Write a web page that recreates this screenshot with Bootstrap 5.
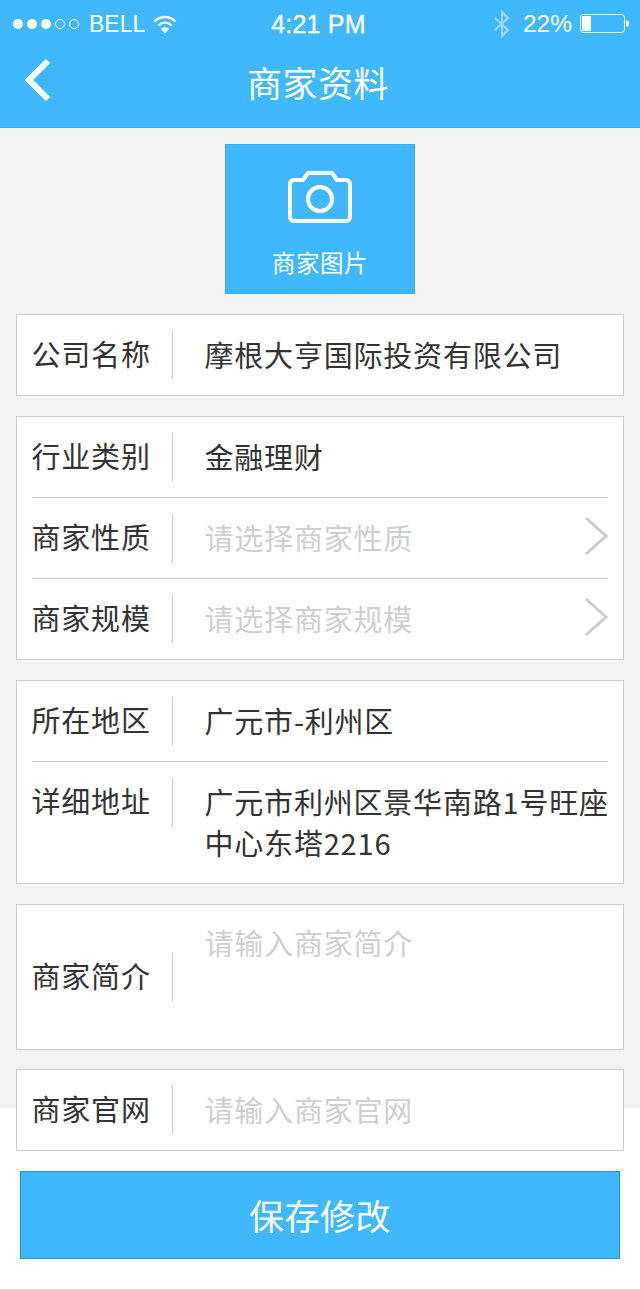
<!DOCTYPE html>
<html lang="zh-CN">
<head>
<meta charset="utf-8">
<title>商家资料</title>
<link href="https://cdn.jsdelivr.net/npm/bootstrap@5.3.0/dist/css/bootstrap.min.css" rel="stylesheet">
<style>
html,body{background:#fff}
body{width:640px;height:1289px;overflow:hidden;font-family:"Liberation Sans","Noto Sans CJK SC",sans-serif;color:#333}
.app-top{height:128px;background:#40b8ff;color:#fff;border-bottom:1px solid #35aef5}
.status-bar{height:48px;padding:0 11px 0 13px;font-size:24.5px;line-height:1}
.status-side{flex:1 1 0;min-width:0}
.status-time{font-size:25px;-webkit-text-stroke:.35px #fff;letter-spacing:.2px;margin-right:5px}
.status-bt{margin-right:13px}
.nav-title{font-size:35px;line-height:48px;font-family:"Noto Sans CJK SC",sans-serif;letter-spacing:.5px;margin-top:5px;margin-right:4px}
.nav-line{height:79px;padding:0 24px 16px}
.nav-side{flex:1 1 0}
.page-body{height:1161px;padding:16px 16px 0;background:linear-gradient(#f2f2f2 980px,#fff 980px)}
.photo-tile{width:190px;height:150px;background:#40b8ff;border:1px solid #35aef5;color:#fff;font-family:"Noto Sans CJK SC",sans-serif;font-size:23.5px;letter-spacing:.5px;line-height:32px;margin-bottom:20px;padding-top:26px}
.photo-tile svg{display:block;margin-bottom:23px}
.form-box{border:1px solid #ccc;border-radius:0;background:#fff;margin-bottom:20px}
.form-box.box-tight{margin-top:-1px}
.form-line{margin:0 15px;padding:16px 0;min-height:81px;border-bottom:1px solid #ccc;font-family:"Noto Sans CJK SC",sans-serif;font-size:29px;letter-spacing:.8px}
.form-line:last-child{border-bottom:0;min-height:80px}
.form-line.line-tall{min-height:121px}
.form-line.line-intro{min-height:144px}
.field-label{width:141px;height:48px;line-height:45px;border-right:1px solid #ccc;flex:none;color:#333;margin-left:-.5px}
.field-value{padding-left:32px;line-height:41px;padding-top:2.5px;color:#333;flex:1 1 0;min-width:0;white-space:nowrap}
.field-hint{color:#cfcfcf}
.intro-value{margin-top:1px;padding-top:0}
.row-arrow{flex:none;margin-top:2px}
.save-btn{display:block;width:600px;height:88px;margin:0 auto;background:#40b8ff;border:1px solid #0f9bd7;color:#fff;font-family:"Noto Sans CJK SC",sans-serif;font-size:35px;letter-spacing:.5px;line-height:82px;padding:0;border-radius:0}
.save-btn:hover{background:#40b8ff;color:#fff;border-color:#0f9bd7}
</style>
</head>
<body>
<header class="app-top">
  <div class="status-bar d-flex align-items-center">
    <div class="status-side d-flex align-items-center">
      <svg width="68" height="12" viewBox="0 0 68 12" class="me-2" aria-hidden="true">
        <circle cx="5" cy="6" r="5" fill="#fff"/><circle cx="19" cy="6" r="5" fill="#fff"/><circle cx="33" cy="6" r="5" fill="#fff"/>
        <circle cx="47" cy="6" r="4.5" fill="none" stroke="#fff"/><circle cx="61" cy="6" r="4.5" fill="none" stroke="#fff"/>
      </svg>
      <span style="font-size:23px">BELL</span>
      <svg width="24" height="19" viewBox="0 0 24 19" class="ms-2" aria-hidden="true">
        <path d="M1.5 6.5C7.5 .5 16.5 .5 22.5 6.5" fill="none" stroke="#fff" stroke-width="2.4"/>
        <path d="M5.5 10.5C9.5 6.6 14.5 6.6 18.5 10.5" fill="none" stroke="#fff" stroke-width="2.4"/>
        <path d="M8 14 C10.5 11.5 13.5 11.5 16 14 L12 18.5Z" fill="#fff"/>
      </svg>
    </div>
    <div class="status-time">4:21 PM</div>
    <div class="status-side d-flex align-items-center justify-content-end">
      <svg width="16" height="28" viewBox="0 0 16 28" class="status-bt" opacity=".5" aria-hidden="true">
        <path d="M1 8 14 20 8 26V2L14 8 1 20" fill="none" stroke="#fff" stroke-width="2"/>
      </svg>
      <span class="me-2">22%</span>
      <svg width="49" height="20" viewBox="0 0 49 20" aria-hidden="true">
        <rect x=".5" y=".5" width="44" height="18" rx="3" fill="none" stroke="#fff"/>
        <rect x="2" y="2" width="9" height="15" rx="1" fill="#fff"/>
        <path d="M46 6.5h1.5a1.5 1.5 0 0 1 1.5 1.5v3a1.5 1.5 0 0 1-1.5 1.5H46Z" fill="#fff"/>
      </svg>
    </div>
  </div>
  <div class="nav-line d-flex align-items-center">
    <div class="nav-side">
      <svg width="28" height="44" viewBox="0 0 28 44" class="d-block" aria-hidden="true">
        <path d="M24 3 5 22 24 41" fill="none" stroke="#fff" stroke-width="6"/>
      </svg>
    </div>
    <div class="nav-title">商家资料</div>
    <div class="nav-side"></div>
  </div>
</header>

<main class="page-body">
  <div class="photo-tile mx-auto d-flex flex-column align-items-center">
    <svg width="64" height="52" viewBox="0 0 64 52" aria-hidden="true">
      <path d="M6 9H15L20 2H44L49 9H58a4 4 0 0 1 4 4V46a4 4 0 0 1-4 4H6a4 4 0 0 1-4-4V13a4 4 0 0 1 4-4Z" fill="none" stroke="#fff" stroke-width="4" stroke-linejoin="round"/>
      <circle cx="32" cy="28" r="12" fill="none" stroke="#fff" stroke-width="4"/>
    </svg>
    <div>商家图片</div>
  </div>

  <section class="card form-box">
    <div class="form-line d-flex align-items-start">
      <div class="field-label">公司名称</div>
      <div class="field-value">摩根大亨国际投资有限公司</div>
    </div>
  </section>

  <section class="card form-box">
    <div class="form-line d-flex align-items-start">
      <div class="field-label">行业类别</div>
      <div class="field-value">金融理财</div>
    </div>
    <div class="form-line d-flex align-items-start">
      <div class="field-label">商家性质</div>
      <div class="field-value field-hint">请选择商家性质</div>
      <svg width="24" height="40" viewBox="0 0 24 40" class="row-arrow" aria-hidden="true"><path d="M2 2 22 20 2 38" fill="none" stroke="#ccc" stroke-width="3"/></svg>
    </div>
    <div class="form-line d-flex align-items-start">
      <div class="field-label">商家规模</div>
      <div class="field-value field-hint">请选择商家规模</div>
      <svg width="24" height="40" viewBox="0 0 24 40" class="row-arrow" aria-hidden="true"><path d="M2 2 22 20 2 38" fill="none" stroke="#ccc" stroke-width="3"/></svg>
    </div>
  </section>

  <section class="card form-box">
    <div class="form-line d-flex align-items-start">
      <div class="field-label">所在地区</div>
      <div class="field-value">广元市-利州区</div>
    </div>
    <div class="form-line line-tall d-flex align-items-start">
      <div class="field-label">详细地址</div>
      <div class="field-value">广元市利州区景华南路1号旺座<br>中心东塔2216</div>
    </div>
  </section>

  <section class="card form-box">
    <div class="form-line line-intro d-flex align-items-center">
      <div class="field-label">商家简介</div>
      <div class="field-value field-hint intro-value align-self-start">请输入商家简介</div>
    </div>
  </section>

  <section class="card form-box box-tight">
    <div class="form-line d-flex align-items-start">
      <div class="field-label">商家官网</div>
      <div class="field-value field-hint">请输入商家官网</div>
    </div>
  </section>

  <button type="button" class="btn save-btn">保存修改</button>
</main>
</body>
</html>
